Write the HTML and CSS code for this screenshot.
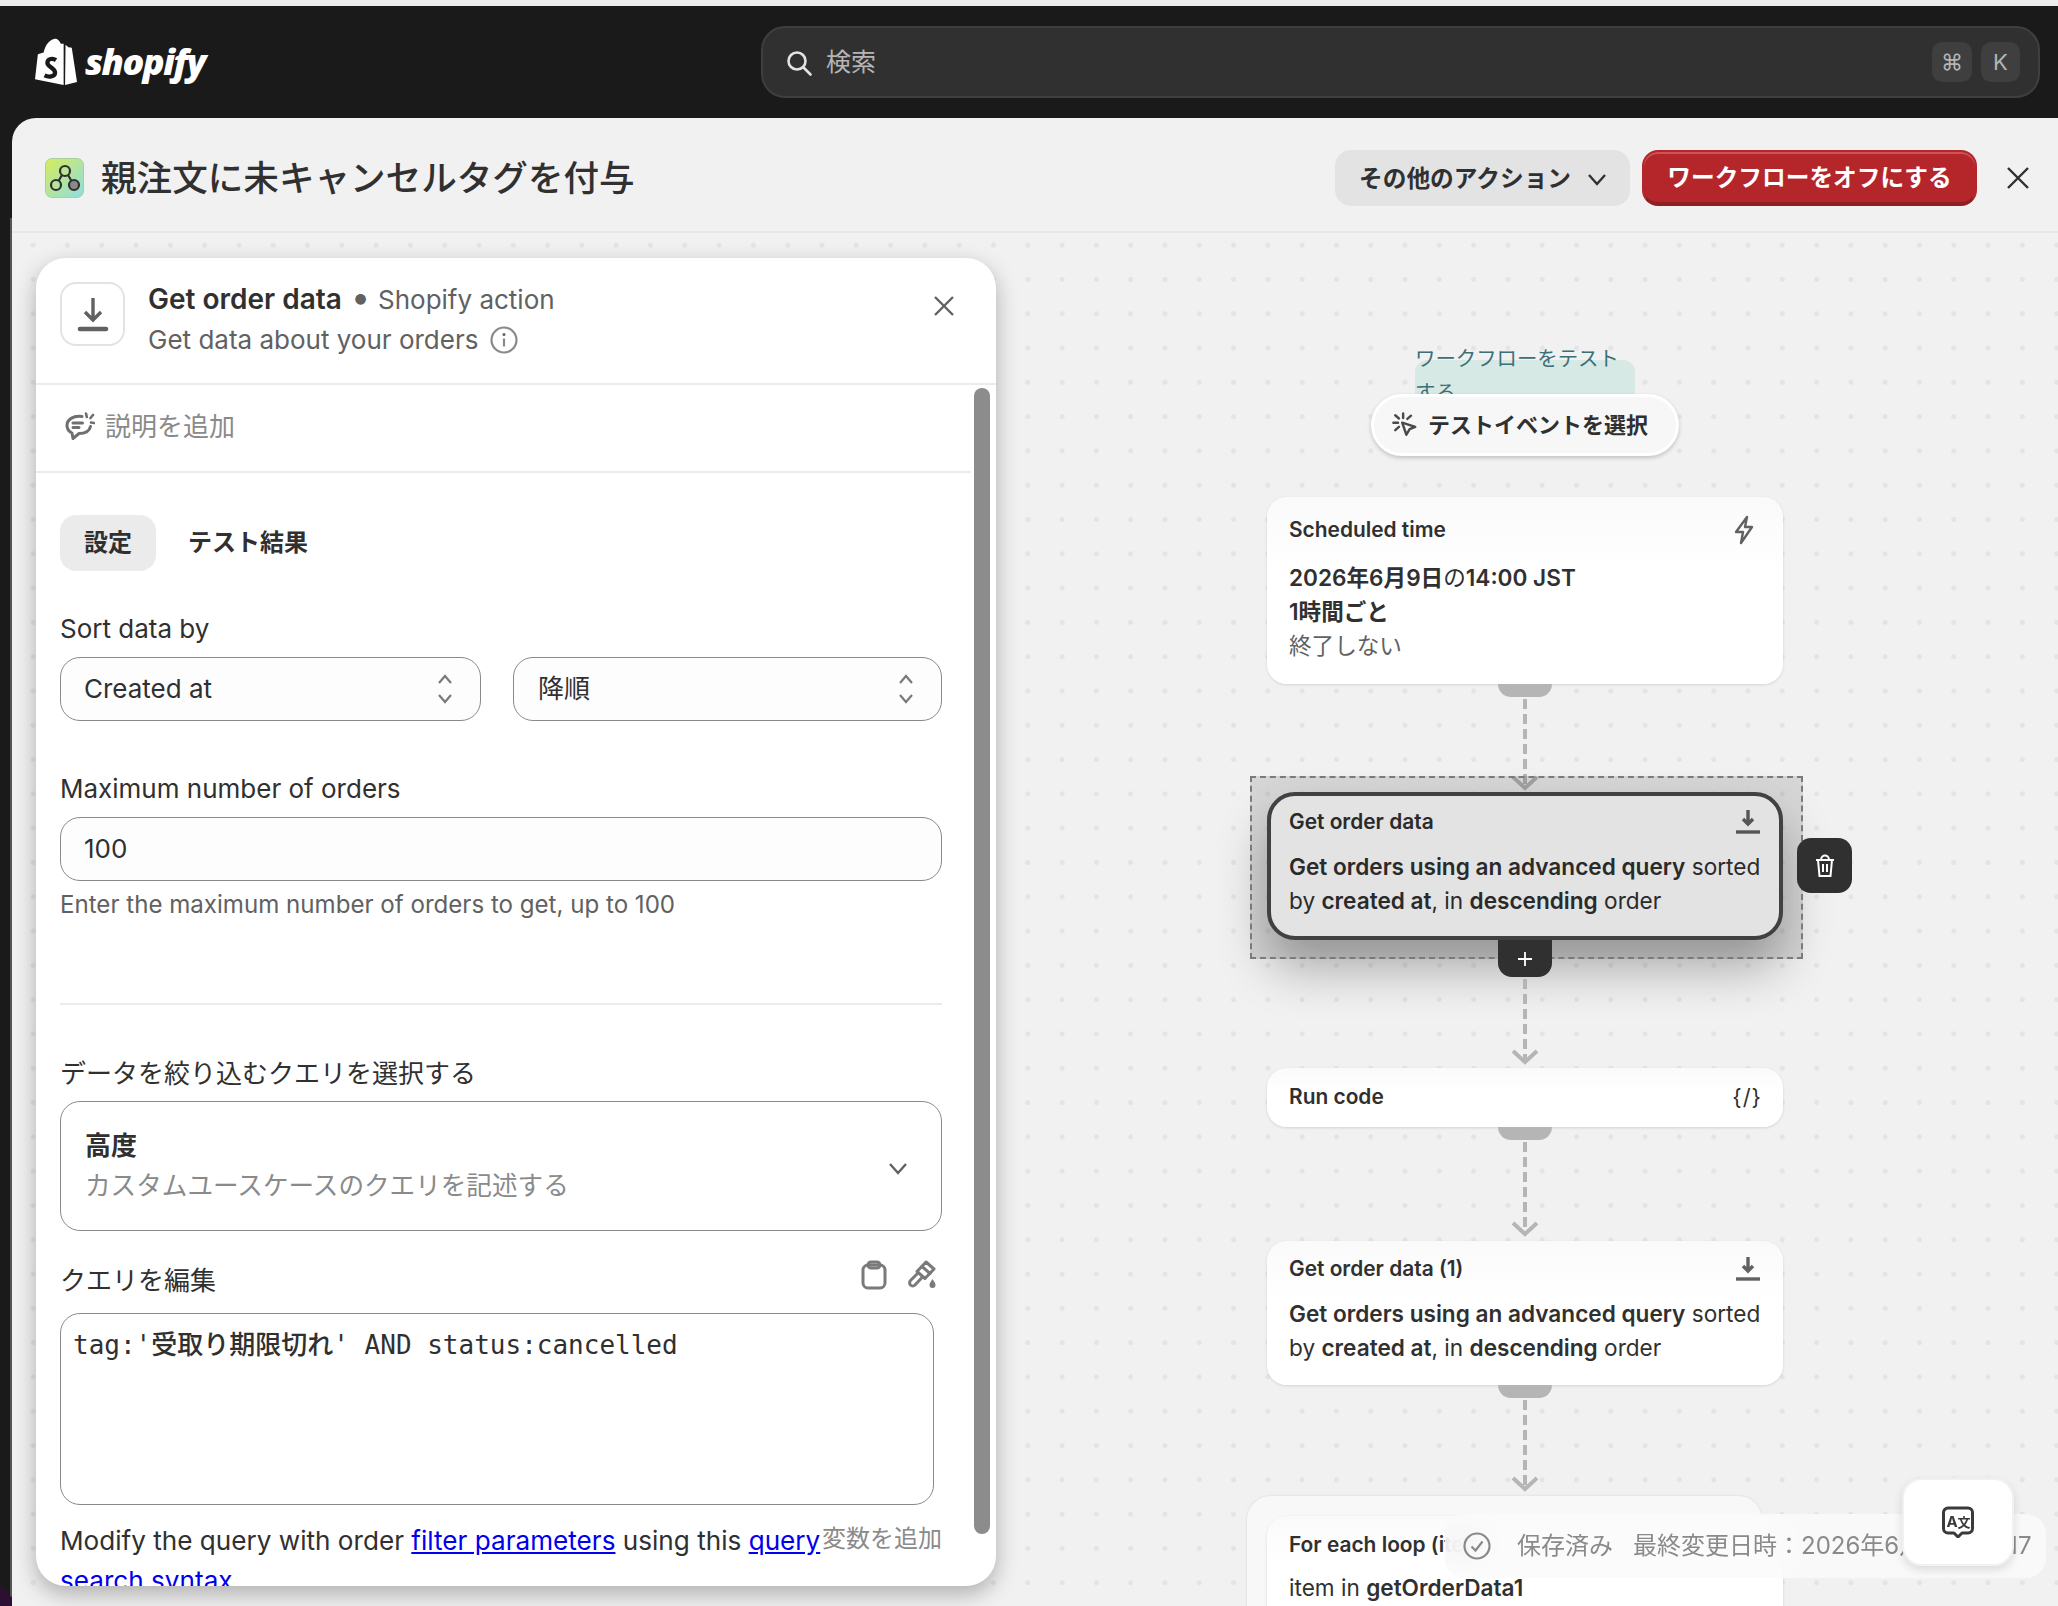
FILE: index.html
```html
<!DOCTYPE html>
<html lang="ja">
  <head>
    <meta charset="UTF-8">
    <title>親注文に未キャンセルタグを付与</title>
    <link rel="stylesheet" href="styles.css">
  </head>
  <body>
    <header class="topbar">
      <div class="logo">
        <svg class="logo-bag" viewBox="0 0 44 50" width="42" height="48">
          <path fill="#fff" d="M30 6 27 6C25 1 22 0 20 1 15 2 11 7 9 15L3 17 0 43 30 49Z"/>
          <path fill="#fff" d="M32 7 31.500 49 44 46 38.500 10 35 9.500Z"/>
          <path fill="none" stroke="#fff" stroke-width="1.600" d="M11 15C13 7 17 3 20 3 23 3 25 8 25 13M17 14C18 8 21 5 24 5 27 6 28 9 28 12"/>
          <path fill="none" stroke="#1a1a1a" stroke-width="4.500" d="M22 23C19 21 13 21 13 26 13 30 21 31 21 36 21 41 14 41 10 39"/>
        </svg>
        <span class="logo-text">shopify</span>
      </div>
      <div class="search">
        <svg class="search-icon" viewBox="0 0 28 28" width="28" height="28"><circle cx="12" cy="12" r="8.500"/><path d="m18.500 18.500 7 7"/></svg>
        <span class="search-text">検索</span>
        <span class="key key-cmd">⌘</span>
        <span class="key">K</span>
      </div>
    </header>

    <div class="frame">
      <main class="main">
        <div class="page-head">
          <span class="app-icon">
            <svg viewBox="0 0 38 38" width="38" height="38"><g fill="none" stroke="#303030" stroke-width="2.200"><circle cx="19" cy="12" r="5"/><circle cx="10" cy="26" r="5"/><circle cx="28" cy="26" fill="#8a8a8a" r="5"/><path d="m16 16-3.500 6M22 16l3.500 6"/></g></svg>
          </span>
          <h1 class="page-title">親注文に未キャンセルタグを付与</h1>
          <div class="head-actions">
            <button class="btn btn-grey">その他のアクション
              <svg viewBox="0 0 20 20" width="20" height="20"><path d="m2 6 8 9 8-9"/></svg>
            </button>
            <button class="btn btn-red">ワークフローをオフにする</button>
            <svg class="head-close" viewBox="0 0 24 24" width="24" height="24"><path d="m2 2 20 20M22 2 2 22"/></svg>
          </div>
        </div>

        <div class="canvas">
          <aside class="panel">
            <div class="panel-head">
              <span class="panel-icon">
                <svg viewBox="0 0 40 40" width="40" height="40"><path class="ic" d="M20 4v21M12 18l8 8 8-8"/><path class="ic ic-thick" d="M7 35h26"/></svg>
              </span>
              <div class="panel-titles">
                <div class="panel-title"><strong>Get order data</strong><span class="bullet">•</span>Shopify action</div>
                <div class="panel-sub">Get data about your orders
                  <svg viewBox="0 0 28 28" width="28" height="28"><circle class="ic-thin" cx="14" cy="14" r="12.500"/><path class="ic-thin" d="M14 12.500v8"/><circle cx="14" cy="8.500" r="1.500" fill="#616161"/></svg>
                </div>
              </div>
              <svg class="panel-close" viewBox="0 0 24 24" width="24" height="24"><path d="m3 3 18 18M21 3 3 21"/></svg>
            </div>

            <div class="desc-row">
              <svg viewBox="0 0 30 30" width="30" height="30"><path class="ic-bold" d="M17 4.500C8 3.500 2 7.500 2 13.500c0 3.500 2 6 5 7.500l1 5.500 6-5c6 0 10.500-2.500 11.500-7"/><path class="ic-bold" d="M8 11h9.500M8 15.500h6"/><path class="ic-spark" d="M21 1.500l.8 3.500M28 3l-2.500 3M29 11l-3-.5"/></svg>
              <span>説明を追加</span>
            </div>

            <div class="panel-body">
              <div class="tabs">
                <span class="tab tab-active">設定</span>
                <span class="tab">テスト結果</span>
              </div>

              <label class="label label-first">Sort data by</label>
              <div class="select-row">
                <div class="field select select-a">Created at
                  <svg class="updown" viewBox="0 0 18 34" width="18" height="34"><path d="m3 11 6-7 6 7M3 23l6 7 6-7"/></svg>
                </div>
                <div class="field select select-b">降順
                  <svg class="updown" viewBox="0 0 18 34" width="18" height="34"><path d="m3 11 6-7 6 7M3 23l6 7 6-7"/></svg>
                </div>
              </div>

              <label class="label label-next">Maximum number of orders</label>
              <div class="field">100</div>
              <p class="help">Enter the maximum number of orders to get, up to 100</p>

              <hr class="divider">

              <label class="label label-ja">データを絞り込むクエリを選択する</label>
              <div class="query-type">
                <div>
                  <div class="query-type-name">高度</div>
                  <div class="query-type-sub">カスタムユースケースのクエリを記述する</div>
                </div>
                <svg viewBox="0 0 24 24" width="24" height="24"><path d="m4 8 8 9 8-9"/></svg>
              </div>

              <div class="query-head">
                <label class="label label-ja">クエリを編集</label>
                <div class="query-tools">
                  <svg viewBox="0 0 28 30" width="28" height="30"><rect class="ic-tool" x="3" y="5" width="22" height="23" rx="5"/><rect class="ic-tool" x="8" y="2" width="12" height="6" rx="3" fill="#fff"/></svg>
                  <svg viewBox="0 0 30 30" width="30" height="30"><path class="ic-tool" d="M19 2 27 9 18 18.500 10 11.500Z"/><path class="ic-tool" d="M11 13 3.500 20.500a3 3 0 0 0 4.500 4.500L15.500 17"/><path class="ic-tool" d="M15 6.500 23 13.500"/><path d="M25.500 19c1.500 2.500 3 4 3 6a3 3 0 0 1-6 0c0-2 1.500-3.500 3-6Z" fill="#7a7a7a"/></svg>
                </div>
              </div>
              <div class="query-box">tag:'<span class="query-cjk">受取り期限切れ</span>' AND status:cancelled</div>

              <div class="query-foot">
                <p class="query-note">Modify the query with order <a href="#">filter parameters</a> using this <a href="#">query search syntax</a></p>
                <span class="add-var">変数を追加</span>
              </div>
            </div>
            <div class="scroll-thumb"></div>
          </aside>

          <section class="flow">
            <div class="test-note"><div class="test-note-text">ワークフローをテストする</div></div>
            <div class="test-pill">
              <svg viewBox="0 0 28 28" width="26" height="26"><path class="ic-click" d="M11 11.500 25 16l-6 2.500-3.500 6Z"/><path class="ic-click" d="M12 1.500v5M3.500 3.500l4 3.500M1.500 11.500h5M3.500 19.500l4-3.500M20.500 4l-4 3.500"/></svg>
              テストイベントを選択
            </div>

            <article class="node node-scheduled">
              <div class="node-head">Scheduled time
                <svg viewBox="0 0 24 30" width="24" height="30"><path class="ic-desc" d="M15 2 4 17h7l-2 11 11-16h-7Z"/></svg>
              </div>
              <div class="node-text"><b>2026年6月9日</b>の<b>14:00 JST</b><br><b>1時間ごと</b><br><span class="muted">終了しない</span></div>
            </article>
            <div class="link link-a">
              <span class="handle"></span><span class="dash"></span>
              <svg class="arrow" viewBox="0 0 28 16" width="28" height="16"><path d="m2 2 12 11L26 2"/></svg>
            </div>

            <article class="node node-selected">
              <div class="node-head">Get order data
                <svg viewBox="0 0 26 26" width="26" height="26"><path class="ic" d="M13 1v14M8 10l5 5 5-5"/><path class="ic" d="M1 23h24"/></svg>
              </div>
              <div class="node-text"><b>Get orders using an advanced query</b> sorted by <b>created at</b>, in <b>descending</b> order</div>
              <button class="node-trash">
                <svg viewBox="0 0 24 24" width="24" height="24"><path d="M3 6h18M8 6c0-6 8-6 8 0M5 6l1.500 16h11L19 6M10 10v8M14 10v8"/></svg>
              </button>
              <span class="selection"></span>
            </article>
            <div class="link link-b">
              <span class="handle handle-add">
                <svg viewBox="0 0 16 16" width="16" height="16"><path d="M8 1v14M1 8h14"/></svg>
              </span>
              <span class="dash"></span>
              <svg class="arrow" viewBox="0 0 28 16" width="28" height="16"><path d="m2 2 12 11L26 2"/></svg>
            </div>

            <article class="node node-run">
              <div class="node-head">Run code
                <span class="code-mark">{/}</span>
              </div>
            </article>
            <div class="link link-c">
              <span class="handle"></span><span class="dash"></span>
              <svg class="arrow" viewBox="0 0 28 16" width="28" height="16"><path d="m2 2 12 11L26 2"/></svg>
            </div>

            <article class="node">
              <div class="node-head">Get order data (1)
                <svg viewBox="0 0 26 26" width="26" height="26"><path class="ic" d="M13 1v14M8 10l5 5 5-5"/><path class="ic" d="M1 23h24"/></svg>
              </div>
              <div class="node-text"><b>Get orders using an advanced query</b> sorted by <b>created at</b>, in <b>descending</b> order</div>
            </article>
            <div class="link link-d">
              <span class="handle"></span><span class="dash"></span>
              <svg class="arrow" viewBox="0 0 28 16" width="28" height="16"><path d="m2 2 12 11L26 2"/></svg>
            </div>

            <div class="loop">
              <article class="node node-loop">
                <div class="node-head">For each loop (item</div>
                <div class="node-text">item in <b>getOrderData1</b></div>
              </article>
            </div>
          </section>

          <div class="save-bar">
            <svg viewBox="0 0 28 28" width="28" height="28"><circle class="ic-thin" cx="14" cy="14" r="12.500"/><path class="ic-thin" d="m8.500 14.500 4 4 7-9"/></svg>
            <span class="save-state">保存済み</span>
            <span class="save-date">最終変更日時：2026年6月9日 12:17</span>
          </div>
          <button class="translate">
            <svg viewBox="0 0 32 32" width="32" height="32"><path class="ic-trans" d="M6 2h20a4.500 4.500 0 0 1 4.500 4.500v16A4.500 4.500 0 0 1 26 27h-6l-4 4-4-4H6a4.500 4.500 0 0 1-4.500-4.500v-16A4.500 4.500 0 0 1 6 2Z"/><text class="trans-text" x="4.500" y="20.500">A</text><text class="trans-text trans-cjk" x="15.500" y="20.500">文</text></svg>
          </button>
        </div>
      </main>
    </div>
  </body>
</html>
```

FILE: styles.css
```css
* {
  box-sizing: border-box;
}

html, body {
  margin: 0;
  height: 1606px;
  overflow: hidden;
}

body {
  background-color: #ececec;
  padding-top: 6px;
  font-family: Inter, "Noto Sans CJK JP", sans-serif;
  font-size: 26px;
  line-height: 40px;
  color: #303030;
}

svg {
  display: block;
  flex-shrink: 0;
}

button {
  font-family: inherit;
  border: none;
}

/* top bar */
.topbar {
  display: flex;
  align-items: center;
  height: 112px;
  padding: 0 18px 0 35px;
  background-color: #1a1a1a;
}

.logo {
  display: flex;
  align-items: center;
  gap: 8px;
  width: 726px;
}

.logo-text {
  font-family: "Open Sans", sans-serif;
  font-size: 36px;
  font-style: italic;
  font-weight: 800;
  letter-spacing: -1.5px;
  color: #fff;
}

.search {
  display: flex;
  align-items: center;
  flex: 1;
  height: 72px;
  padding: 0 18px 0 22px;
  background-color: #303030;
  border: 2px solid #3f3f3f;
  border-radius: 24px;
  color: #b5b5b5;
}

.search-icon {
  margin-top: 1px;
  fill: none;
  stroke: #e3e3e3;
  stroke-width: 2.6;
  stroke-linecap: round;
}

.search-text {
  flex: 1;
  margin-left: 13px;
  font-size: 25px;
}

.key {
  display: flex;
  align-items: center;
  justify-content: center;
  width: 39px;
  height: 40px;
  background-color: #3f3f3f;
  border-radius: 10px;
  font-size: 22px;
  color: #b5b5b5;
}

.key-cmd {
  margin-right: 9px;
  width: 40px;
}

/* page */
.frame {
  height: 1488px;
  padding-left: 12px;
  background-color: #1a1a1a;
  background-image:
    linear-gradient(45deg, #2c0f33 14px, transparent 15px),
    linear-gradient(90deg, transparent 10px, #555 10px, #555 12px, transparent 12px);
  background-position: 0 0, 0 100px;
  background-repeat: no-repeat;
}

.main {
  height: 1488px;
  overflow: hidden;
  background-color: #f1f1f1;
  border-radius: 24px 0 0 0;
}

.page-head {
  display: flex;
  align-items: center;
  height: 115px;
  padding: 7px 28px 1px 33px;
  border-bottom: 2px solid #e8e8e8;
}

.app-icon {
  display: flex;
  align-items: center;
  justify-content: center;
  width: 39px;
  height: 40px;
  border-radius: 7px;
  background: linear-gradient(135deg, #d6ec5c, #8fdde0);
  border: 1px solid #a9cf9e;
}

.page-title {
  margin: 0 0 0 17px;
  padding-top: 2px;
  font-size: 35.6px;
  font-weight: 500;
  line-height: 44px;
}

.head-actions {
  display: flex;
  align-items: center;
  gap: 12px;
  margin-left: auto;
}

.btn {
  display: flex;
  align-items: center;
  height: 56px;
  padding-bottom: 2px;
  border-radius: 16px;
  font-size: 23.7px;
  font-weight: 600;
}

.btn-grey {
  gap: 16px;
  width: 295px;
  padding: 0 14px 2px 24px;
  background-color: #e3e3e3;
  color: #303030;
}

.btn-grey svg {
  fill: none;
  stroke: #303030;
  stroke-width: 2.4;
  margin-top: 5px;
}

.btn-red {
  justify-content: center;
  width: 335px;
  background-color: #b5262b;
  color: #fff;
  border: 2px solid #b5262b;
  border-bottom: 4px solid #8e1f23;
  box-shadow: inset 0 2px 0 #cc5458;
}

.head-close {
  margin-left: 17px;
  fill: none;
  stroke: #303030;
  stroke-width: 2.4;
}

/* dotted canvas */
.canvas {
  position: relative;
  display: flex;
  align-items: flex-start;
  height: 1373px;
  padding: 25px 0 0 24px;
  background-color: #f1f1f1;
  background-image: radial-gradient(circle, #e4e4e4 2.2px, transparent 2.6px);
  background-size: 34.3px 34.3px;
  background-position: 4px -5px;
}

/* left panel */
.panel {
  position: relative;
  width: 960px;
  height: 1328px;
  flex-shrink: 0;
  overflow: hidden;
  background-color: #fff;
  border-radius: 30px;
  box-shadow: 0 8px 22px rgba(0, 0, 0, 0.28);
}

.panel-head {
  position: relative;
  display: flex;
  height: 127px;
  padding: 24px 0 0 24px;
  border-bottom: 2px solid #ebebeb;
}

.panel-icon {
  display: flex;
  align-items: center;
  justify-content: center;
  width: 65px;
  height: 64px;
  border: 2px solid #e3e3e3;
  border-radius: 16px;
}

.ic {
  fill: none;
  stroke: #616161;
  stroke-width: 3.4;
}

.ic-thick {
  stroke-width: 4.6;
  stroke-linecap: round;
}

.ic-thin {
  fill: none;
  stroke: #8a8a8a;
  stroke-width: 2.2;
}

.ic-desc {
  fill: none;
  stroke: #616161;
  stroke-width: 2.4;
  stroke-linecap: round;
  stroke-linejoin: round;
}

.ic-bold {
  fill: none;
  stroke: #6f6f6f;
  stroke-width: 3;
  stroke-linecap: round;
  stroke-linejoin: round;
}

.ic-spark {
  fill: none;
  stroke: #6f6f6f;
  stroke-width: 2.6;
  stroke-linecap: round;
}

.ic-tool {
  fill: none;
  stroke: #7a7a7a;
  stroke-width: 3;
  stroke-linecap: round;
  stroke-linejoin: round;
}

.ic-click {
  fill: none;
  stroke: #4a4a4a;
  stroke-width: 2.6;
  stroke-linecap: round;
  stroke-linejoin: round;
}

.panel-titles {
  margin-left: 23px;
}

.panel-title {
  margin-top: -3px;
  color: #616161;
}

.panel-title strong {
  font-size: 28px;
  font-weight: 600;
  color: #303030;
}

.bullet {
  margin: 0 8px 0 9px;
  font-size: 34px;
  line-height: 1;
}

.panel-sub {
  display: flex;
  align-items: center;
  gap: 12px;
  margin-top: 0;
  color: #616161;
}

.panel-close {
  position: absolute;
  top: 36px;
  right: 40px;
  fill: none;
  stroke: #616161;
  stroke-width: 2.4;
}

.desc-row {
  display: flex;
  align-items: center;
  gap: 10px;
  width: 935px;
  height: 88px;
  padding: 0 0 2px 29px;
  border-bottom: 2px solid #ebebeb;
  color: #8a8a8a;
}

.panel-body {
  width: 906px;
  padding: 42px 0 0 24px;
}

.tabs {
  display: flex;
  gap: 16px;
}

.tab {
  display: flex;
  align-items: center;
  height: 56px;
  padding: 0 16px 0 16px;
  border-radius: 16px;
  font-size: 24px;
  font-weight: 600;
}

.tab-active {
  width: 96px;
  padding: 0 24px;
  background-color: #ebebeb;
}

.label {
  display: block;
}

.label-first {
  margin-top: 38px;
}

.label-next {
  margin-top: 48px;
}

/* the CJK face sits higher in the line than the Latin one */
.label-ja {
  padding-top: 2px;
  margin-bottom: -2px;
}

.select-row {
  display: flex;
  gap: 32px;
  margin-top: 8px;
}

.field {
  position: relative;
  display: flex;
  align-items: center;
  height: 64px;
  margin-top: 8px;
  padding: 0 23px;
  background-color: #fdfdfd;
  border: 1.5px solid #8a8a8a;
  border-radius: 20px;
}

.select {
  margin-top: 0;
}

.select-a {
  width: 421px;
}

.select-b {
  width: 429px;
  padding-left: 24px;
}

.updown {
  position: absolute;
  top: 14px;
  right: 26px;
  fill: none;
  stroke: #7a7a7a;
  stroke-width: 2.2;
}

.help {
  margin: 4px 0 0;
  font-size: 24.1px;
  color: #616161;
}

.divider {
  height: 2px;
  margin: 78px 0 47px;
  background-color: #ebebeb;
  border: none;
}

.query-type {
  display: flex;
  align-items: center;
  justify-content: space-between;
  height: 130px;
  margin-top: 9px;
  padding: 0 31px 0 24px;
  border: 1.5px solid #8a8a8a;
  border-radius: 20px;
}

.query-type svg {
  fill: none;
  stroke: #616161;
  stroke-width: 2.4;
  margin-top: 3px;
}

.query-type-name {
  font-weight: 600;
}

.query-type-sub {
  color: #8a8a8a;
  font-size: 25.6px;
}

.query-head {
  display: flex;
  align-items: center;
  justify-content: space-between;
  margin-top: 28px;
}

.query-tools {
  display: flex;
  align-items: center;
  gap: 19px;
  margin: -8px 5px 0 0;
}

.query-box {
  width: 874px;
  height: 192px;
  margin-top: 14px;
  padding: 9px 12px;
  border: 1.5px solid #8a8a8a;
  border-radius: 20px;
  font-family: "DejaVu Sans Mono", "Noto Sans CJK JP", monospace;
  font-size: 26px;
}

.query-cjk {
  font-family: "Noto Sans CJK JP", sans-serif;
  font-size: 26px;
  font-weight: 500;
}

.query-foot {
  position: relative;
  margin-top: 16px;
}

.query-note {
  width: 765px;
  margin: 0;
  font-size: 26.13px;
}

.query-note a {
  color: #0000ee;
}

.add-var {
  position: absolute;
  top: -2px;
  right: 0;
  font-size: 24px;
  color: #8a8a8a;
}

.scroll-thumb {
  position: absolute;
  top: 130px;
  right: 6px;
  width: 16px;
  height: 1146px;
  background-color: #8c8c8c;
  border-radius: 8px;
}

/* workflow column */
.flow {
  display: flex;
  flex-direction: column;
  align-items: center;
  width: 516px;
  margin: 102px 0 0 271px;
  flex-shrink: 0;
}

.test-note {
  width: 220px;
  height: 34px;
  background-color: #d6e9e5;
  border-radius: 12px 12px 0 0;
}

.test-note-text {
  margin-top: -18px;
  font-size: 20.4px;
  line-height: 34px;
  color: #3b7077;
}

.test-pill {
  position: relative;
  display: flex;
  align-items: center;
  gap: 10px;
  width: 308px;
  height: 62px;
  padding-left: 18px;
  background-color: #f7f7f7;
  border: 3px solid #fff;
  border-radius: 31px;
  box-shadow: 0 2px 4px rgba(0, 0, 0, 0.2);
  font-size: 22px;
  font-weight: 600;
}

.node {
  position: relative;
  width: 516px;
  padding: 14px 22px 20px;
  background: linear-gradient(#fafafa, #fff 40%);
  border-radius: 20px;
  box-shadow: 0 1px 3px rgba(0, 0, 0, 0.12);
  font-size: 22.6px;
  line-height: 34px;
}

.node-head {
  display: flex;
  align-items: center;
  justify-content: space-between;
  height: 28px;
  margin-bottom: 14px;
  font-size: 20.9px;
  font-weight: 600;
}

.node-head svg {
  margin-right: 0;
}

.node-text b {
  font-weight: 600;
}

.muted {
  color: #616161;
}

.node-scheduled {
  margin-top: 41px;
  height: 187px;
  padding-top: 19px;
}

.node-scheduled .node-head {
  margin-bottom: 17px;
}

.node-scheduled .node-head svg {
  margin-right: 5px;
}

.node-selected {
  height: 148px;
  padding: 12px 18px 16px;
  background: #fff;
  border: 4px solid #4a4a4a;
  border-radius: 28px;
  box-shadow: 0 28px 50px rgba(0, 0, 0, 0.3);
  z-index: 1;
}

.selection {
  position: absolute;
  top: -20px;
  left: -21px;
  right: -24px;
  bottom: -23px;
  background-color: rgba(0, 0, 0, 0.11);
  border: 2px dashed #7a7a7a;
  pointer-events: none;
  z-index: 3;
}

.node-trash {
  position: absolute;
  top: 42px;
  right: -73px;
  display: flex;
  align-items: center;
  justify-content: center;
  width: 55px;
  height: 55px;
  padding: 0;
  background-color: #303030;
  border-radius: 14px;
  z-index: 4;
}

.node-trash svg {
  fill: none;
  stroke: #fff;
  stroke-width: 2;
}

.node-run {
  height: 59px;
  padding-top: 15px;
}

.code-mark {
  font-size: 22px;
  font-weight: 400;
  letter-spacing: 1px;
  margin-right: -1px;
}

/* connectors between nodes */
.link {
  display: flex;
  flex-direction: column;
  align-items: center;
  position: relative;
}

.link-a {
  height: 108px;
  z-index: 0;
}

.link-b {
  height: 128px;
  z-index: 2;
}

.link-c {
  height: 114px;
}

.link-d {
  height: 111px;
}

.handle {
  display: flex;
  align-items: center;
  justify-content: center;
  width: 54px;
  height: 13px;
  flex-shrink: 0;
  background-color: #b5b5b5;
  border-radius: 0 0 14px 14px;
}

.handle-add {
  height: 37px;
  background-color: #303030;
}

.handle-add svg {
  fill: none;
  stroke: #fff;
  stroke-width: 1.8;
}

.dash {
  flex: 1;
  width: 4px;
  margin-top: 2px;
  background-image: repeating-linear-gradient(#b5b5b5 0 10px, transparent 10px 15px);
}

.arrow {
  margin: -12px 0 3px;
  fill: none;
  stroke: #b5b5b5;
  stroke-width: 4;
}

.link-a .arrow {
  margin-bottom: 1px;
}

.link-c .arrow, .link-d .arrow {
  margin-bottom: 4px;
}

.loop {
  align-self: flex-start;
  width: 515px;
  height: 140px;
  margin-left: -20px;
  padding: 20px 0 0 20px;
  background-color: #f8f8f8;
  border-radius: 24px 24px 0 0;
  box-shadow: 0 0 3px rgba(0, 0, 0, 0.1);
}

.node-loop {
  height: 120px;
  padding-top: 15px;
}

.node-loop .node-head {
  margin-bottom: 12px;
}

/* overlays */
.save-bar {
  position: absolute;
  top: 1281px;
  left: 1433px;
  display: flex;
  align-items: center;
  width: 601px;
  height: 64px;
  padding-left: 18px;
  background-color: rgba(250, 250, 250, 0.85);
  backdrop-filter: blur(14px);
  border-radius: 20px;
  font-size: 24px;
  color: #8a8a8a;
  white-space: nowrap;
}

.save-bar svg {
  margin-right: 26px;
}

.save-state {
  margin-right: 20px;
}

.save-date {
  word-spacing: 8px;
}

.translate {
  position: absolute;
  top: 1245px;
  left: 1890px;
  display: flex;
  align-items: center;
  justify-content: center;
  width: 112px;
  height: 88px;
  padding: 0;
  background-color: #fff;
  border: 2px solid #f1f1f1;
  border-radius: 20px;
  box-shadow: 0 4px 10px rgba(0, 0, 0, 0.12);
}

.ic-trans {
  fill: none;
  stroke: #3a3a3a;
  stroke-width: 3;
  stroke-linejoin: round;
}

.trans-text {
  font-size: 15px;
  font-weight: 700;
  fill: #3a3a3a;
}

.trans-cjk {
  font-size: 13px;
}
```
